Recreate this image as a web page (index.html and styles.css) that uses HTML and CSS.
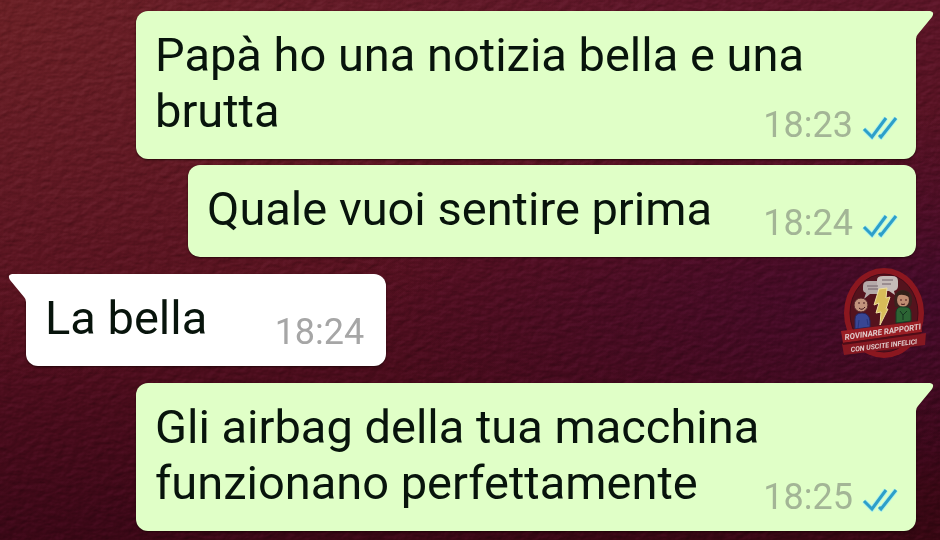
FILE: index.html
```html
<!DOCTYPE html>
<html lang="it">
<head>
<meta charset="utf-8">
<meta name="viewport" content="width=device-width, initial-scale=1">
<title>Chat</title>
<link rel="stylesheet" href="styles.css">
</head>
<body>
<svg class="texture" aria-hidden="true">
  <filter id="leather" x="0" y="0" width="100%" height="100%" color-interpolation-filters="sRGB">
    <feTurbulence type="fractalNoise" baseFrequency="0.1 0.16" numOctaves="3" seed="7" result="noise"/>
    <feDiffuseLighting in="noise" surfaceScale="1.2" diffuseConstant="0.7" lighting-color="#ffffff">
      <feDistantLight azimuth="235" elevation="45"/>
    </feDiffuseLighting>
  </filter>
  <rect width="100%" height="100%" filter="url(#leather)"/>
</svg>
<svg class="defs" aria-hidden="true">
  <symbol id="ticks" viewBox="0 0 36 24">
    <path d="M2 13l8 8L24 2M17 20l2 1L34 2" fill="none" stroke="#8feaff" stroke-width="5" opacity=".6"/>
    <path d="M2 13l8 8L24 2M17 19l2 2L34 2" fill="none" stroke="#2d9fc9" stroke-width="3"/>
  </symbol>
  <symbol id="tail" viewBox="0 0 18 28">
    <path d="M0 0H14Q19 1 16 6L2 23Q0 25 0 28Z" fill="currentColor"/>
  </symbol>
</svg>
<main class="chat">
  <article class="bubble out first">
    <svg class="tail"><use href="#tail"/></svg>
    <p class="text">Papà ho una notizia bella e una brutta</p>
    <div class="meta"><time>18:23</time><svg class="ticks" role="img" aria-label="Letto"><use href="#ticks"/></svg></div>
  </article>
  <article class="bubble out">
    <p class="text">Quale vuoi sentire prima</p>
    <div class="meta"><time>18:24</time><svg class="ticks" role="img" aria-label="Letto"><use href="#ticks"/></svg></div>
  </article>
  <div class="row">
    <article class="bubble in first">
      <svg class="tail"><use href="#tail"/></svg>
      <p class="text">La bella</p>
      <div class="meta"><time>18:24</time></div>
    </article>
    <svg class="badge" viewBox="0 0 110 110" role="img" aria-label="Rovinare rapporti con uscite infelici">
      <ellipse cx="54" cy="53" rx="40" ry="45" fill="#8b171f"/>
      <ellipse cx="54" cy="53" rx="34" ry="39" fill="#54131d" stroke="#3f0c19" stroke-width="1"/>
      <path d="M33 26q0-5 6-5h11q5 0 5 5v4q0 4-5 4H40l-6 5 2-6q-3-1-3-3z" fill="#b5a9a9"/>
      <path d="M47 20q0-4 6-4h9q6 0 6 5v5q0 4-4 5l1 4-6-4h-5q-7 0-7-5z" fill="#c5bbb8"/>
      <path d="M37 26h11M38 29h10M52 20h11M52 24h9" stroke="#716068" fill="none"/>
      <path d="M49 29l8-1-1 10 4-1-4 12h2l-8 16 1-13-5 1 3-10-5 2z" fill="#d8bd59" stroke="#eee0a0" stroke-width="1"/>
      <path d="M25 69V59q0-6 7-6t8 8v6z" fill="#384694" stroke="#28265d"/>
      <path d="M29 60l-1 8M37 59l1 6" stroke="#27347c" fill="none"/>
      <circle cx="31" cy="45" r="7" fill="#c2937d" stroke="#512026"/>
      <path d="M28 43h2M33 43h2M29 48q3 3 6-1" stroke="#40171d" fill="none"/>
      <path d="M65 47q-3-15 6-17 11-1 11 10 0 5-2 7z" fill="#3b221e"/>
      <ellipse cx="73" cy="40" rx="6" ry="7" fill="#c08c72"/>
      <path d="M67 36q5-3 12 1v-4q-6-5-12 0z" fill="#322019"/>
      <path d="M70 40h2M75 40h2M71 44q2 1 4 0" stroke="#4a1719" fill="none"/>
      <path d="M66 63V52q1-6 7-5 8-1 8 6v8z" fill="#2c6534" stroke="#173d25"/>
      <path d="M70 51l3 4 4-4M73 55v5" stroke="#15321f" fill="none"/>
      <path d="M11 71L90 61l2 11-79 11z" fill="#9a1e24"/>
      <path d="M12 84l84-11-1 12-81 10z" fill="#851821"/>
      <path d="M12 83l79-11v2L13 85z" fill="#4f0d17"/>
      <g class="badge-text" fill="#e0cccc">
        <text transform="translate(15 80) rotate(-8)">ROVINARE RAPPORTI</text>
        <text class="badge-line" transform="translate(21 92) rotate(-7)">CON USCITE INFELICI</text>
      </g>
    </svg>
  </div>
  <article class="bubble out first">
    <svg class="tail"><use href="#tail"/></svg>
    <p class="text">Gli airbag della tua macchina funzionano perfettamente</p>
    <div class="meta"><time>18:25</time><svg class="ticks" role="img" aria-label="Letto"><use href="#ticks"/></svg></div>
  </article>
</main>
</body>
</html>
```
FILE: styles.css
```css
* { box-sizing: border-box; }

body {
  margin: 0;
  min-height: 100vh;
  font-family: Roboto, sans-serif;
  background:
    radial-gradient(ellipse at 100% 55%, rgba(58, 8, 48, .6), transparent 45%),
    radial-gradient(ellipse at 0 0, rgba(115, 38, 34, .6), transparent 50%),
    linear-gradient(175deg, #5e172a 0%, #54101f 50%, #3c0817 85%, #360712 100%);
}

.texture {
  position: fixed;
  inset: 0;
  width: 100%;
  height: 100%;
  mix-blend-mode: soft-light;
  opacity: .6;
}

.defs {
  position: absolute;
  width: 0;
  height: 0;
}

.chat {
  position: relative;
  display: flex;
  flex-direction: column;
  align-items: flex-end;
  padding: 11px 24px 10px 26px;
}

.bubble {
  position: relative;
  display: grid;
  padding: 16px 18px 13px 19px;
  border-radius: 12px;
  box-shadow: 0 1px 2px rgba(20, 0, 0, .7);
}

.out {
  margin-left: 110px;
  color: #e0ffc7;
  background: #e0ffc7;
}

.in {
  padding-right: 22px;
  color: #fff;
  background: #fff;
}

.out.first { border-top-right-radius: 0; }
.in.first { border-top-left-radius: 0; }

.bubble + .bubble { margin-top: 6px; }

.row {
  position: relative;
  display: flex;
  align-self: stretch;
  margin: 17px 0;
}

.text,
.meta {
  grid-area: 1 / 1;
}

.text {
  margin: 0 0 7px;
  font-size: 47px;
  line-height: 56px;
  color: #08140c;
}

.text::after {
  content: "";
  display: inline-block;
  width: 186px;
}

.in .text::after { width: 157px; }

.meta {
  display: flex;
  align-items: center;
  gap: 9px;
  align-self: end;
  justify-self: end;
  font-size: 36px;
  line-height: 42px;
  color: #a3b596;
}

.in .meta { color: #a6a6a6; }

.ticks {
  width: 36px;
  height: 24px;
  margin-top: 6px;
}

.tail {
  position: absolute;
  top: 0;
  left: 100%;
  width: 18px;
  height: 28px;
}

.in .tail {
  right: 100%;
  left: auto;
  transform: scaleX(-1);
}

.badge {
  position: absolute;
  top: -14px;
  right: -24px;
  width: 110px;
  height: 110px;
}

.badge-text {
  font: italic 700 8px "Liberation Sans Narrow", Roboto, sans-serif;
}

.badge-line { font-size: 7px; }
```
